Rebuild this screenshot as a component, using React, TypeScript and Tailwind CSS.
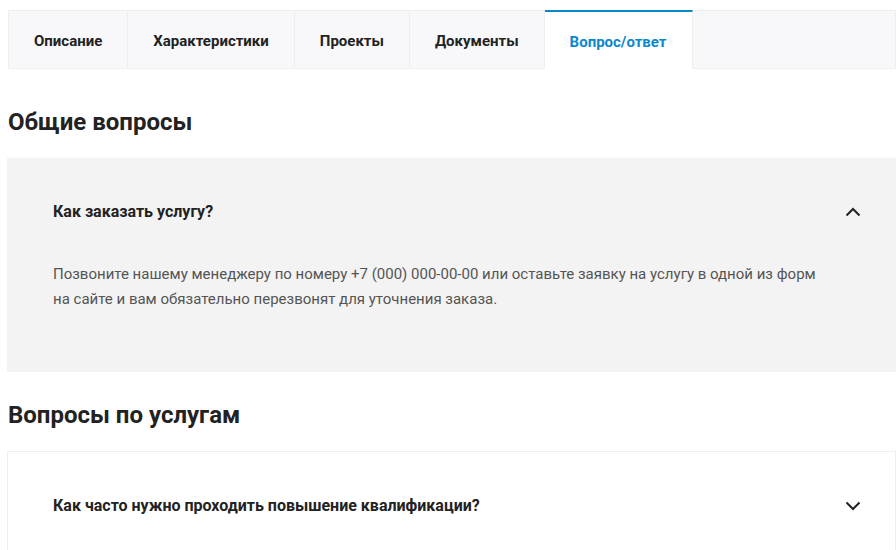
import { useState } from 'react';

const tabs = ['Описание', 'Характеристики', 'Проекты', 'Документы', 'Вопрос/ответ'];

function Chevron({ up }: { up: boolean }) {
  return (
    <svg width="16" height="10" viewBox="0 0 16 10" className="shrink-0">
      <polyline
        points={up ? '1.5,8.5 8,2 14.5,8.5' : '1.5,1.5 8,8 14.5,1.5'}
        fill="none"
        stroke="#222"
        strokeWidth="2"
      />
    </svg>
  );
}

function FaqItem({ q, a, open }: { q: string; a?: string; open?: boolean }) {
  const [isOpen, setOpen] = useState(!!open);
  return (
    <div className={isOpen ? 'bg-[#f3f3f3] pl-[46px] pr-[35px]' : 'bg-white border border-[#eeeeee] pl-[45px] pr-[34px]'}>
      <button
        onClick={() => setOpen(!isOpen)}
        className="w-full flex items-center justify-between pt-[40px] pb-[40px] text-left"
      >
        <span className="text-[16px] leading-[28px] font-bold text-[#222]">{q}</span>
        <Chevron up={isOpen} />
      </button>
      {isOpen && a && (
        <p className="-mt-[4px] pb-[60px] max-w-[778px] text-[15px] leading-[25px] text-[#555]">
          {a}
        </p>
      )}
    </div>
  );
}

export default function App() {
  const [active, setActive] = useState(4);

  return (
    <div className="min-h-[550px] bg-white pl-[7px] pt-[10px] font-['Roboto',sans-serif] overflow-hidden">
      <div className="flex h-[59px] bg-[#f8f8fa] border border-[#eeeeee] ml-[1px]">
        {tabs.map((t, i) => (
          <button
            key={t}
            onClick={() => setActive(i)}
            className={
              i === active
                ? 'px-[25px] pt-[4px] h-[59px] -mt-[1px] bg-white border-t-2 border-[#0a88cc] border-r border-r-[#eeeeee] text-[15px] font-bold text-[#0a88cc]'
                : 'px-[25px] pt-[4px] border-r border-[#eeeeee] text-[15px] font-bold text-[#222]'
            }
          >
            {t}
          </button>
        ))}
      </div>

      <h2 className="mt-[37px] mb-[20px] ml-[1px] text-[24px] leading-[32px] font-bold text-[#222]">Общие вопросы</h2>
      <FaqItem
        open
        q="Как заказать услугу?"
        a="Позвоните нашему менеджеру по номеру +7 (000) 000-00-00 или оставьте заявку на услугу в одной из форм на сайте и вам обязательно перезвонят для уточнения заказа."
      />

      <h2 className="mt-[27px] mb-[20px] ml-[1px] text-[24px] leading-[32px] font-bold text-[#222]">Вопросы по услугам</h2>
      <FaqItem q="Как часто нужно проходить повышение квалификации?" />
    </div>
  );
}
